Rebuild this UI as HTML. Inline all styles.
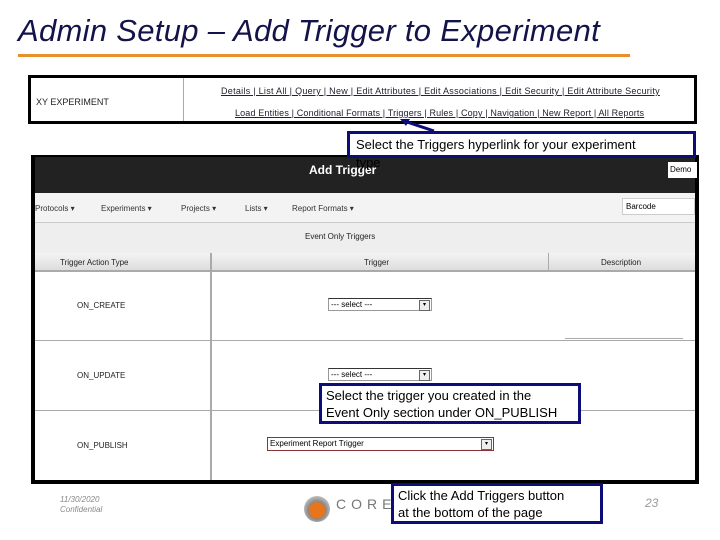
<!DOCTYPE html><html><head><style>
body{margin:0;width:720px;height:540px;background:#fff;position:relative;overflow:hidden;font-family:"Liberation Sans",sans-serif}
.a{position:absolute}
.l{font-size:9px;color:#223;text-decoration:underline}
.c{position:absolute;border:3px solid #0d0d7a;background:#fff;font-size:13px;color:#000;padding:2px 4px;box-sizing:border-box;line-height:17px}
.hl{position:absolute;background:#aaa}
.sel{position:absolute;border:1px solid #999;border-top:1px solid #333;font-size:8px;height:13px;box-sizing:border-box;padding-left:2px;line-height:11px}
.sel i{position:absolute;right:1px;top:1px;width:9px;height:9px;border:1px solid #666;background:#eee;font-size:6px;text-align:center;font-style:normal;line-height:9px}
.n{position:absolute;font-size:8px;color:#333;top:204px}
.r{position:absolute;font-size:8px;color:#222;left:77px}
</style></head><body>
<div class="a" style="left:18px;top:13px;font-size:31px;font-style:italic;color:#13134a;letter-spacing:0.3px">Admin Setup – Add Trigger to Experiment</div>
<div class="a" style="left:18px;top:54px;width:612px;height:3px;background:#e8902a"></div>
<div class="a" style="left:28px;top:75px;width:669px;height:49px;border:3px solid #000;box-sizing:border-box"></div>
<div class="a" style="left:183px;top:78px;width:1px;height:43px;background:#aaa"></div>
<div class="a" style="left:36px;top:97px;font-size:9px;color:#222">XY EXPERIMENT</div>
<div class="a l" style="left:221px;top:86px;white-space:nowrap;letter-spacing:0.28px">Details | List All | Query | New | Edit Attributes | Edit Associations | Edit Security | Edit Attribute Security</div>
<div class="a l" style="left:235px;top:108px;white-space:nowrap;letter-spacing:0.15px">Load Entities | Conditional Formats | Triggers | Rules | Copy | Navigation | New Report | All Reports</div>
<svg class="a" style="left:398px;top:118px" width="40" height="16"><line x1="36" y1="13" x2="6" y2="3" stroke="#0d0d7a" stroke-width="3"/><polygon points="2,1 12,1 8,8" fill="#0d0d7a"/></svg>
<div class="a" style="left:31px;top:155px;width:668px;height:329px;border:4px solid #000;box-sizing:border-box;background:#fff"></div>
<div class="a" style="left:35px;top:157px;width:660px;height:36px;background:#222"></div>
<div class="a" style="left:309px;top:163px;font-size:12px;font-weight:bold;color:#fff">Add Trigger</div>
<div class="a" style="left:668px;top:162px;width:27px;height:16px;background:#fff;font-size:8px;line-height:16px;padding-left:2px">Demo</div>
<div class="a" style="left:35px;top:193px;width:660px;height:29px;background:#f3f3f3;border-bottom:1px solid #ccc"></div>
<div class="n" style="left:35px">Protocols ▾</div><div class="n" style="left:101px">Experiments ▾</div><div class="n" style="left:181px">Projects ▾</div><div class="n" style="left:245px">Lists ▾</div><div class="n" style="left:292px">Report Formats ▾</div>
<div class="a" style="left:622px;top:198px;width:73px;height:17px;background:#fff;border:1px solid #ccc;font-size:8px;box-sizing:border-box;padding:3px">Barcode</div>
<div class="a" style="left:35px;top:223px;width:660px;height:30px;background:#eee"></div>
<div class="a" style="left:305px;top:232px;font-size:8px;color:#222">Event Only Triggers</div>
<div class="a" style="left:35px;top:253px;width:660px;height:17px;background:linear-gradient(#f4f4f4,#ddd);border-bottom:2px solid #aaa"></div>
<div class="a" style="left:60px;top:258px;font-size:8px;color:#222">Trigger Action Type</div>
<div class="a" style="left:364px;top:258px;font-size:8px;color:#222">Trigger</div>
<div class="a" style="left:601px;top:258px;font-size:8px;color:#222">Description</div>
<div class="hl" style="left:210px;top:253px;width:2px;height:227px"></div>
<div class="hl" style="left:548px;top:253px;width:1px;height:17px"></div>
<div class="hl" style="left:35px;top:340px;width:660px;height:1px"></div>
<div class="hl" style="left:35px;top:410px;width:660px;height:1px"></div>
<div class="hl" style="left:565px;top:338px;width:118px;height:1px"></div>
<div class="r" style="top:301px">ON_CREATE</div><div class="r" style="top:371px">ON_UPDATE</div><div class="r" style="top:441px">ON_PUBLISH</div>
<div class="sel" style="left:328px;top:298px;width:104px">--- select ---<i>▾</i></div>
<div class="sel" style="left:328px;top:368px;width:104px">--- select ---<i>▾</i></div>
<div class="sel" style="left:267px;top:437px;width:227px;border-color:#833;height:14px">Experiment Report Trigger<i>▾</i></div>
<div class="c" style="left:347px;top:131px;width:349px;height:27px;overflow:visible;line-height:18px;padding-top:2px;padding-left:6px">Select the Triggers hyperlink for your experiment<br>type</div>
<div class="c" style="left:319px;top:383px;width:262px;height:41px;padding-top:1px">Select the trigger you created in the<br>Event Only section under ON_PUBLISH</div>
<div class="c" style="left:391px;top:483px;width:212px;height:41px;padding-top:1px">Click the Add Triggers button<br>at the bottom of the page</div>
<div class="a" style="left:60px;top:495px;font-size:8px;color:#888;font-style:italic;line-height:10px">11/30/2020<br>Confidential</div>
<div class="a" style="left:304px;top:496px;width:26px;height:26px;border-radius:50%;background:radial-gradient(circle at 50% 55%,#e8741c 40%,#888 45%,#ccc 80%)"></div>
<div class="a" style="left:336px;top:496px;font-size:14px;color:#777;letter-spacing:5px">CORE</div>
<div class="a" style="left:645px;top:496px;font-size:12px;color:#999;font-style:italic">23</div>
</body></html>
